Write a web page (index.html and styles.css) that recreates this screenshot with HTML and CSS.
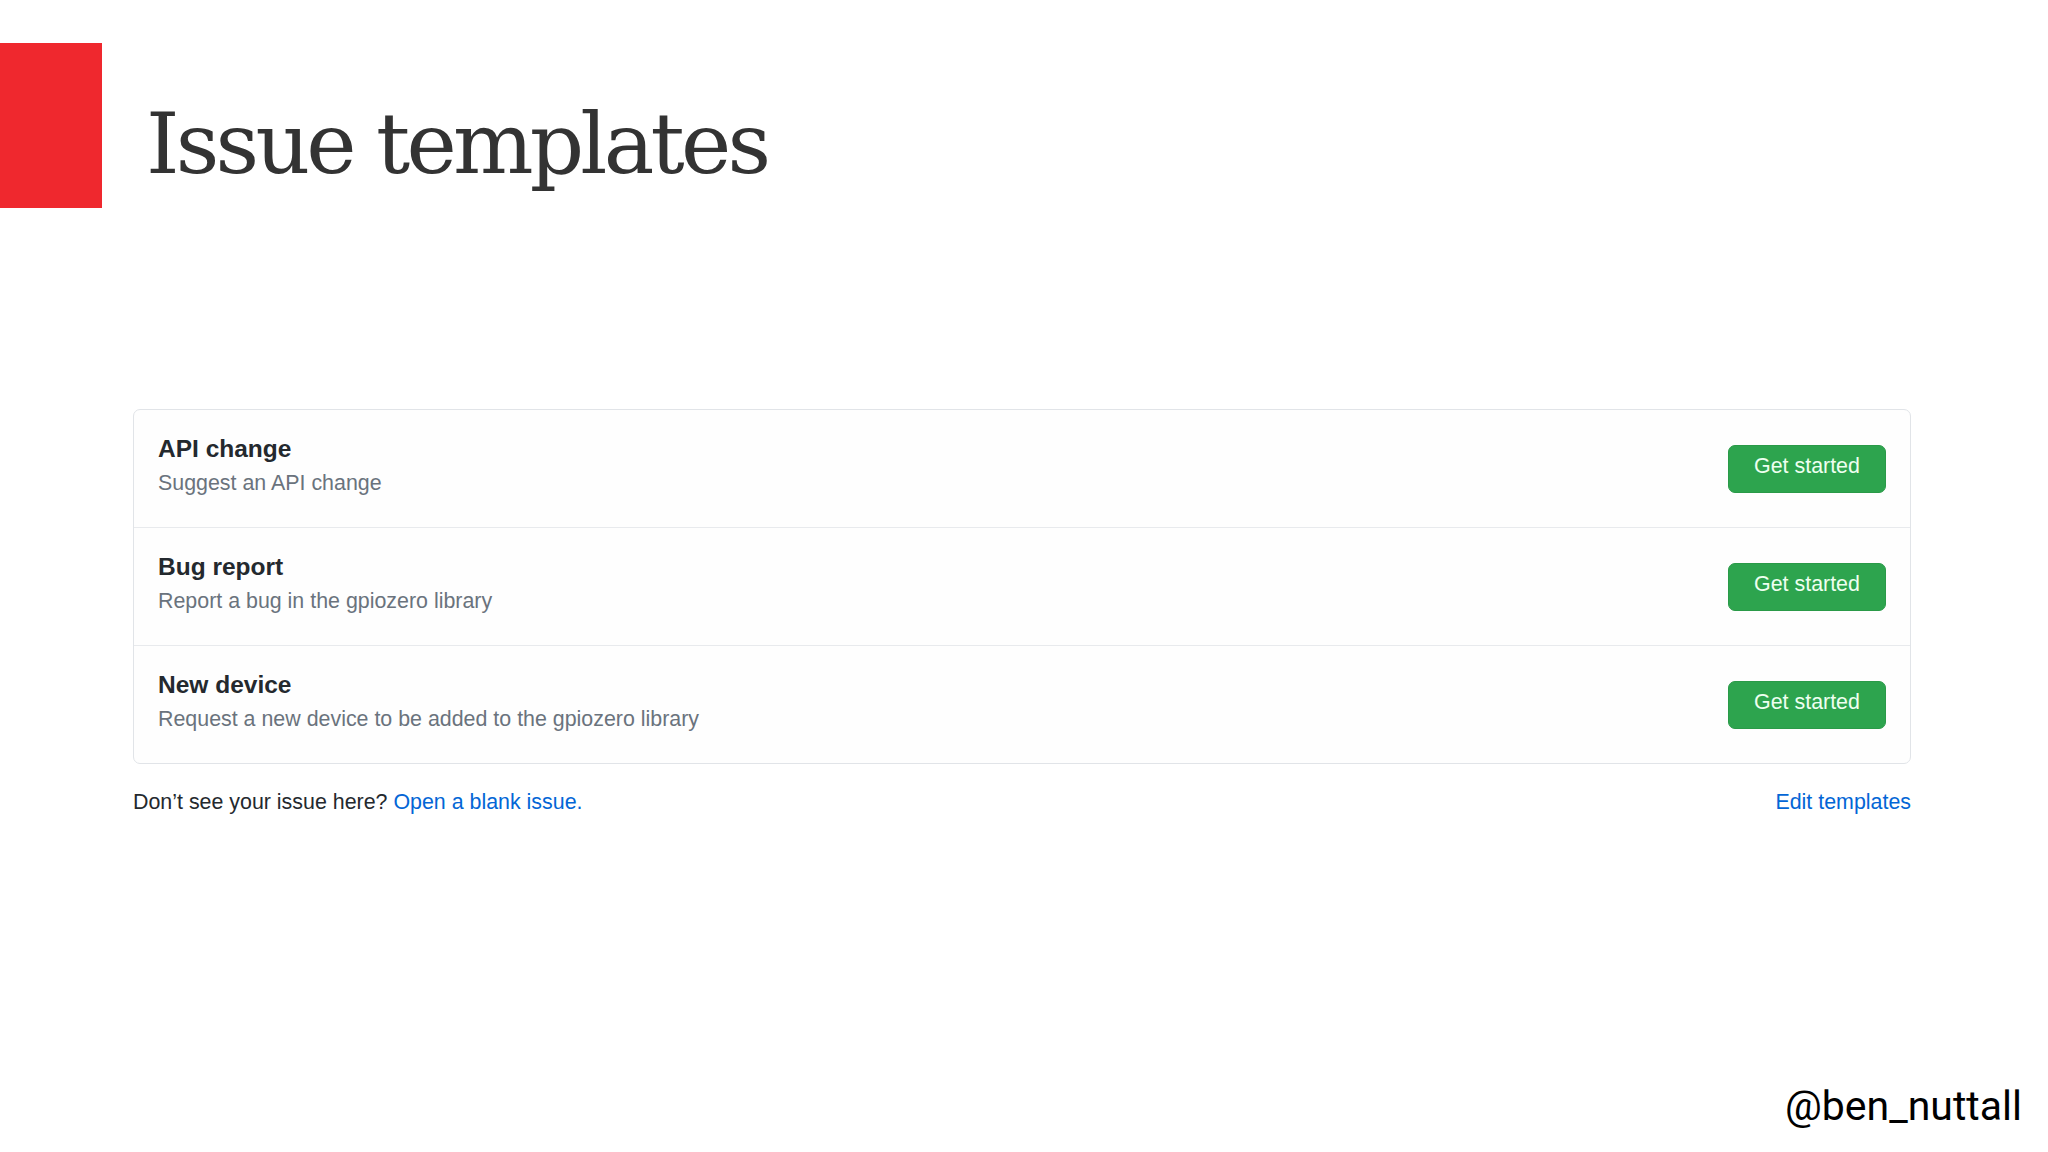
FILE: index.html
```html
<!DOCTYPE html>
<html>
<head>
<meta charset="utf-8">
<link rel="stylesheet" href="styles.css">
</head>
<body>
<div class="slide">
  <header class="header">
    <div class="accent"></div>
    <h1 class="title">Issue templates</h1>
  </header>
  <main class="content">
    <div class="card">
      <div class="row">
        <div class="info">
          <div class="name">API change</div>
          <div class="desc">Suggest an API change</div>
        </div>
        <a class="btn">Get started</a>
      </div>
      <div class="row">
        <div class="info">
          <div class="name">Bug report</div>
          <div class="desc">Report a bug in the gpiozero library</div>
        </div>
        <a class="btn">Get started</a>
      </div>
      <div class="row">
        <div class="info">
          <div class="name">New device</div>
          <div class="desc">Request a new device to be added to the gpiozero library</div>
        </div>
        <a class="btn">Get started</a>
      </div>
    </div>
    <div class="footer">
      <div>Don’t see your issue here? <a class="link">Open a blank issue.</a></div>
      <a class="link">Edit templates</a>
    </div>
  </main>
  <div class="handle">@ben_nuttall</div>
</div>
</body>
</html>
```
FILE: styles.css
```css
html, body {
  margin: 0;
  padding: 0;
  background: #ffffff;
}
.slide {
  width: 2048px;
  height: 1152px;
  display: flex;
  flex-direction: column;
  overflow: hidden;
}
.header {
  display: flex;
  align-items: flex-start;
  margin-top: 43px;
  height: 165px;
}
.accent {
  width: 102px;
  height: 165px;
  background: #ef282e;
  flex: none;
}
.title {
  margin: 0 0 0 44px;
  padding-top: 58px;
  font-family: "DejaVu Serif", "Liberation Serif", serif;
  font-weight: normal;
  font-size: 85px;
  line-height: 1;
  letter-spacing: -3.8px;
  color: #333333;
}
.content {
  margin: 201px 0 0 133px;
  width: 1778px;
  font-family: "Liberation Sans", Arial, sans-serif;
}
.card {
  border: 1px solid #e1e4e8;
  border-radius: 7px;
  background: #fefefe;
}
.row {
  display: flex;
  align-items: center;
  justify-content: space-between;
  padding: 24px 24px 24px 24px;
  height: 69px;
  border-top: 1px solid #e8eaed;
}
.row:first-child {
  border-top: none;
}
.info {
  padding-bottom: 8px;
}
.name {
  font-size: 24.5px;
  font-weight: bold;
  color: #24292e;
  line-height: 37px;
}
.desc {
  font-size: 21.4px;
  color: #6a737d;
  line-height: 32px;
}
.btn {
  display: block;
  width: 158px;
  height: 48px;
  box-sizing: border-box;
  border-radius: 7px;
  background: #2da44e;
  border: 1px solid #2a9a48;
  color: #eefff0;
  font-size: 21.4px;
  line-height: 41px;
  text-align: center;
}
.footer {
  display: flex;
  justify-content: space-between;
  margin-top: 22px;
  font-size: 21.4px;
  line-height: 32px;
  color: #24292e;
}
.link {
  color: #0366d6;
}
.handle {
  margin: auto 26px 22px auto;
  font-family: Roboto, sans-serif;
  font-size: 41px;
  color: #000000;
  line-height: 48px;
}
```
